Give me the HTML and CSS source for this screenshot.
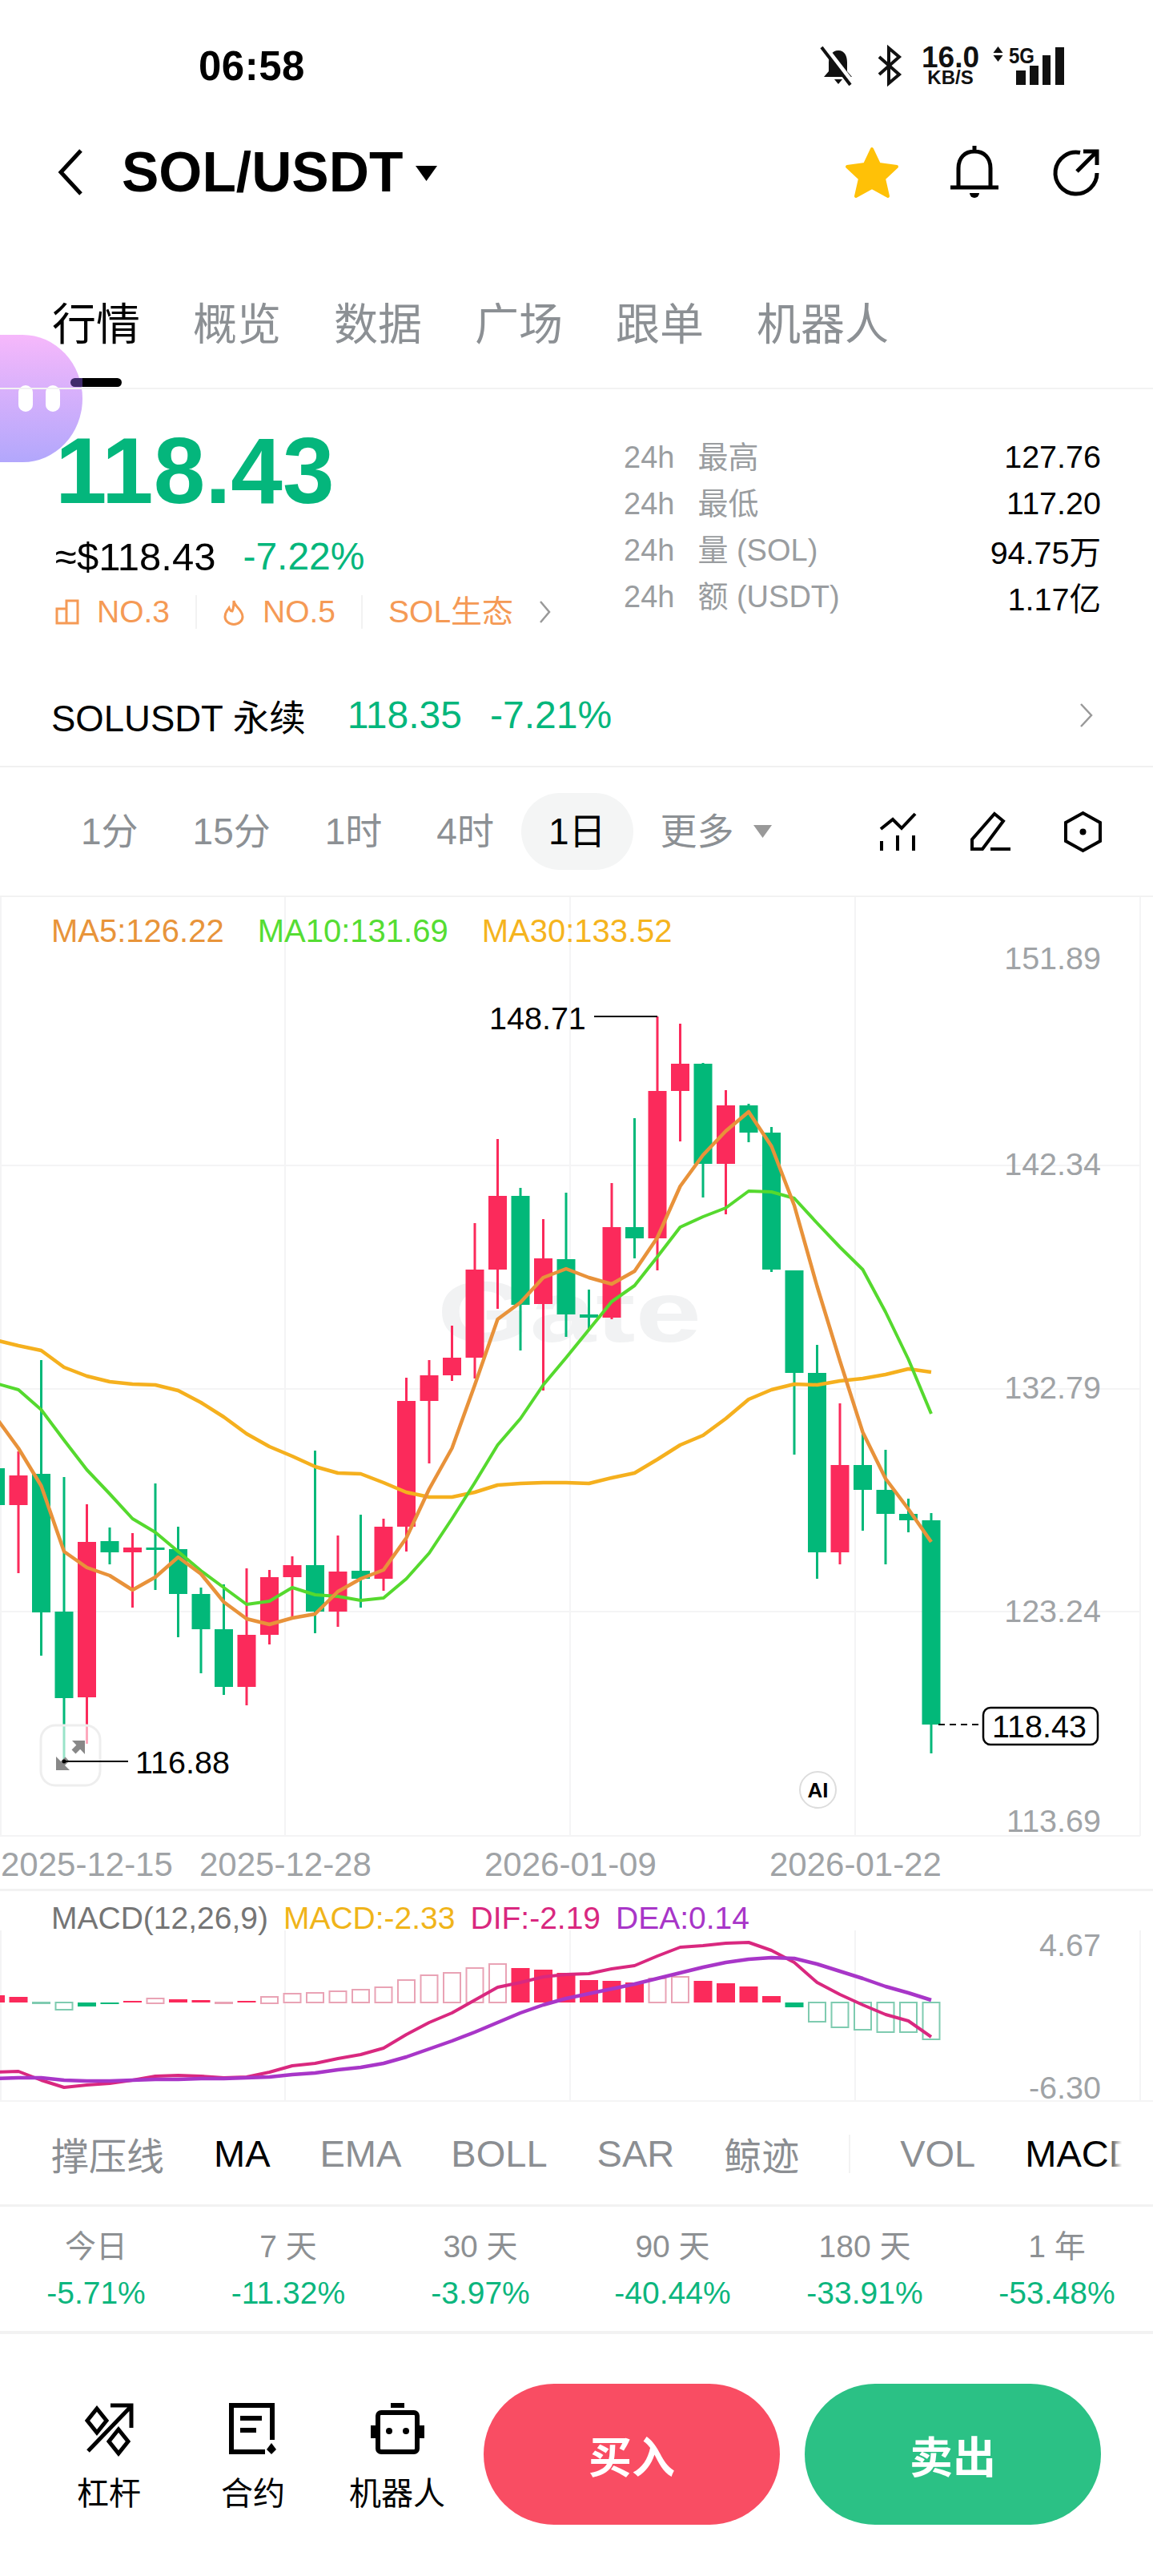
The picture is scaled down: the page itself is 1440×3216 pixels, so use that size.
FILE: index.html
```html
<!DOCTYPE html>
<html lang="zh-CN">
<head>
  <meta charset="UTF-8">
  <title>SOL/USDT</title>
  <link rel="stylesheet" href="styles.css">
</head>
<body>
<div class="blob"><i></i><i></i></div>

<div class="status">
  <span class="time">06:58</span>
  <div class="status-icons">
    <svg width="46" height="48" viewBox="0 0 46 48">
      <path d="M23 5c-8 0-12 7-12 15v11l-6 7h35l-6-7V20c0-8-3-15-11-15z" fill="#111"/>
      <path d="M18 41h10l-5 6z" fill="#111"/>
      <path d="M5 0l37 48" stroke="#fff" stroke-width="7"/>
      <path d="M2 1l36 47" stroke="#111" stroke-width="4"/>
    </svg>
    <svg width="29" height="48" viewBox="0 0 29 48" fill="none" stroke="#111" stroke-width="4">
      <path d="M2 13l25 22-13 11V2l13 11L2 35"/>
    </svg>
    <div class="speed"><b>16.0</b><span>KB/S</span></div>
    <svg class="updown" width="13" height="19" viewBox="0 0 13 19" fill="#111">
      <path d="M6.500 0l6 8H.5zM.5 11h12l-6 8z"/>
    </svg>
    <svg class="signal" width="69" height="48" viewBox="0 0 69 48" fill="#111">
      <text x="0" y="21" class="net" textLength="32" lengthAdjust="spacingAndGlyphs">5G</text>
      <rect x="9" y="30" width="12" height="18"/>
      <rect x="26" y="24" width="11" height="24"/>
      <rect x="42" y="11" width="10" height="37"/>
      <rect x="58" y="1" width="11" height="47"/>
    </svg>
  </div>
</div>

<div class="nav">
  <svg class="back" width="31" height="58" viewBox="0 0 31 58" fill="none" stroke="#000" stroke-width="5">
    <path d="M29 2L4 29l25 27"/>
  </svg>
  <h1 class="pair">SOL/USDT</h1>
  <svg class="pair-caret" width="27" height="19" viewBox="0 0 27 19"><path d="M0 0h27L13.500 19z"/></svg>
  <div class="nav-icons">
    <svg width="68" height="64" viewBox="0 0 68 64" fill="#ffc107" stroke="#ffc107" stroke-width="4" stroke-linejoin="round">
      <path d="M34 3l9 19 22 3-16 15 5 22-20-11-20 11 5-22L3 25l22-3z"/>
    </svg>
    <svg class="nav-bell" width="60" height="66" viewBox="0 0 60 66" fill="none" stroke="#000" stroke-width="5">
      <path d="M30 0v7M10 50V28c0-13 8-21 20-21s20 8 20 21v22M0 52h60"/>
      <path d="M24 59h12a6 6 0 0 1-12 0z" fill="#000" stroke="none"/>
    </svg>
    <svg width="58" height="58" viewBox="0 0 58 58" fill="none" stroke="#000" stroke-width="5">
      <path d="M34 4.500A26 26 0 1 0 55 30M30 28L53 5M38 3h17v17"/>
    </svg>
  </div>
</div>

<ul class="tabs">
  <li class="tab active">行情</li>
  <li class="tab">概览</li>
  <li class="tab">数据</li>
  <li class="tab">广场</li>
  <li class="tab">跟单</li>
  <li class="tab">机器人</li>
</ul>

<div class="ticker">
  <div class="ticker-main">
    <div class="price">118.43</div>
    <div class="sub">
      <span>≈$118.43</span>
      <span class="green">-7.22%</span>
    </div>
    <div class="tags">
      <svg class="tag-icon" width="30" height="32" viewBox="0 0 30 32" fill="none" stroke="#f59a55" stroke-width="3">
        <path d="M14 30V2h14v28zM14 12H2v18h12"/>
      </svg>
      <span>NO.3</span>
      <i class="tag-sep"></i>
      <svg class="tag-icon" width="28" height="33" viewBox="0 0 28 33" fill="none" stroke="#f59a55" stroke-width="3">
        <path d="M14 2c1 8 11 11 11 20a11 9.500 0 0 1-22 0c0-6 3-8 5-11 1 3 3 4 4 4 2-4 2-8 2-13z"/>
      </svg>
      <span>NO.5</span>
      <i class="tag-sep"></i>
      <span>SOL生态</span>
      <svg class="tag-more" width="15" height="28" viewBox="0 0 15 28" fill="none" stroke="#999" stroke-width="2.500">
        <path d="M2 1l11 13L2 27"/>
      </svg>
    </div>
  </div>
  <dl class="stats">
    <div class="stat"><dt><em>24h</em>最高</dt><dd>127.76</dd></div>
    <div class="stat"><dt><em>24h</em>最低</dt><dd>117.20</dd></div>
    <div class="stat"><dt><em>24h</em>量 (SOL)</dt><dd>94.75万</dd></div>
    <div class="stat"><dt><em>24h</em>额 (USDT)</dt><dd>1.17亿</dd></div>
  </dl>
</div>

<div class="perp">
  <span class="perp-name">SOLUSDT 永续</span>
  <span class="green">118.35</span>
  <span class="green">-7.21%</span>
  <svg class="perp-more" width="17" height="30" viewBox="0 0 17 30" fill="none" stroke="#999" stroke-width="2.500">
    <path d="M2 1l13 14L2 29"/>
  </svg>
</div>

<div class="toolbar">
  <span class="tf">1分</span>
  <span class="tf">15分</span>
  <span class="tf">1时</span>
  <span class="tf">4时</span>
  <span class="tf active">1日</span>
  <span class="tf tf-more">更多</span>
  <svg class="more-caret" width="23" height="16" viewBox="0 0 23 16" fill="#999"><path d="M0 0h23L11.500 16z"/></svg>
  <div class="tool-icons">
    <svg width="46" height="47" viewBox="0 0 46 47" fill="none" stroke="#000" stroke-width="4">
      <path d="M2 20L17 8l11 11L45 1M3 35v12M23 28v19M43 28v19"/>
    </svg>
    <svg width="51" height="50" viewBox="0 0 51 50" fill="none" stroke="#000" stroke-width="4">
      <path d="M3 47V35L31 3l11 9-26 35zM26 47h25"/>
    </svg>
    <svg width="47" height="51" viewBox="0 0 47 51" fill="none" stroke="#000" stroke-width="4">
      <path d="M23.500 2L45 14v23L23.500 49 2 37V14z"/>
      <circle cx="23.500" cy="25.500" r="4" fill="#000" stroke="none"/>
    </svg>
  </div>
</div>

<div class="chart">
  <div class="legend">
    <span class="ma5">MA5:126.22</span>
    <span class="ma10">MA10:131.69</span>
    <span class="ma30">MA30:133.52</span>
  </div>
  <svg class="chart-svg" width="1440" height="1238" viewBox="0 1120 1440 1238">
    <path class="grid" d="M1 1120V2292M356 1120V2292M712 1120V2292M1068 1120V2292M1424 1120V2292M0 1455H1424M0 1734H1424M0 2012H1424M0 2292H1424"/>
    <text class="watermark" x="546" y="1675" textLength="330" lengthAdjust="spacingAndGlyphs">Gate</text>
    <g id="candles"></g>
    <g id="ma-lines"></g>

    <rect class="expand-btn" x="51" y="2154" width="74" height="75" rx="18"/>
    <path d="M90 2173h16v17zM70 2193v17h17z" fill="#888"/>
    <path d="M100 2179L92 2187M76 2204l8-8" stroke="#888" stroke-width="7"/>

    <path class="leader" d="M742 1269H821"/>
    <text class="mark" x="611" y="1271">148.71</text>
    <path class="leader" d="M80 2199H160"/>
    <circle cx="80" cy="2199" r="2.500" fill="#000"/>
    <text class="mark" x="169" y="2200">116.88</text>

    <text class="axis" x="1375" y="1196">151.89</text>
    <text class="axis" x="1375" y="1453">142.34</text>
    <text class="axis" x="1375" y="1732">132.79</text>
    <text class="axis" x="1375" y="2011">123.24</text>
    <text class="axis" x="1375" y="2273">113.69</text>

    <path d="M1172 2153H1227" stroke="#000" stroke-width="2" stroke-dasharray="8 6"/>
    <rect x="1228" y="2132" width="143" height="46" rx="9" fill="#fff" stroke="#000" stroke-width="2.500"/>
    <text class="mark" x="1239" y="2155">118.43</text>

    <circle cx="1021.500" cy="2234.500" r="22.500" fill="#fff" stroke="#ddd" stroke-width="2"/>
    <text class="ai" x="1021.500" y="2235">AI</text>

    <text class="date" x="1" y="2327">2025-12-15</text>
    <text class="date" x="249" y="2327">2025-12-28</text>
    <text class="date" x="605" y="2327">2026-01-09</text>
    <text class="date" x="961" y="2327">2026-01-22</text>
  </svg>
</div>

<div class="macd">
  <div class="macd-legend">
    <span class="c-name">MACD(12,26,9)</span>
    <span class="c-macd">MACD:-2.33</span>
    <span class="c-dif">DIF:-2.19</span>
    <span class="c-dea">DEA:0.14</span>
  </div>
  <svg class="macd-svg" width="1440" height="264" viewBox="0 2361 1440 264">
    <path class="grid" d="M1 2410V2623M356 2410V2623M712 2410V2623M1068 2410V2623M1424 2410V2623M0 2623H1440"/>
    <g id="histogram"></g>
    <g id="macd-lines"></g>
    <text class="axis" x="1375" y="2428">4.67</text>
    <text class="axis" x="1375" y="2606">-6.30</text>
  </svg>
</div>

<div class="indicators">
  <span>撑压线</span>
  <span class="on">MA</span>
  <span>EMA</span>
  <span>BOLL</span>
  <span>SAR</span>
  <span>鲸迹</span>
  <i class="ind-sep"></i>
  <span>VOL</span>
  <span class="on">MACD</span>
</div>

<ul class="perf">
  <li><span>今日</span><b>-5.71%</b></li>
  <li><span>7 天</span><b>-11.32%</b></li>
  <li><span>30 天</span><b>-3.97%</b></li>
  <li><span>90 天</span><b>-40.44%</b></li>
  <li><span>180 天</span><b>-33.91%</b></li>
  <li><span>1 年</span><b>-53.48%</b></li>
</ul>

<div class="bottom">
  <div class="shortcut">
    <svg width="61" height="64" viewBox="0 0 61 64" fill="none" stroke="#000" stroke-width="5">
      <path d="M15 7l12 15-12 15L3 22zM42 33l12 15-12 15-12-15zM4 60L56 6M32 3h26v28"/>
    </svg>
    <span>杠杆</span>
  </div>
  <div class="shortcut">
    <svg width="60" height="64" viewBox="0 0 60 64" fill="none" stroke="#000" stroke-width="6">
      <path d="M54 46V3H3v58h42M14 19h27M14 34h20"/>
      <path d="M53 50l6 8-6 6-6-6z" fill="#000" stroke="none"/>
    </svg>
    <span>合约</span>
  </div>
  <div class="shortcut">
    <svg width="67" height="64" viewBox="0 0 67 64" fill="none" stroke="#000" stroke-width="6">
      <rect x="9" y="12" width="49" height="49" rx="4"/>
      <path d="M25 3h17M3 28v16M64 28v16"/>
      <circle cx="23" cy="35" r="4" fill="#000" stroke="none"/>
      <circle cx="44" cy="35" r="4" fill="#000" stroke="none"/>
    </svg>
    <span>机器人</span>
  </div>
  <button class="trade buy">买入</button>
  <button class="trade sell">卖出</button>
</div>

<script src="chart.js"></script>
</body>
</html>
```

FILE: styles.css
```css
* {
  padding: 0;
  margin: 0;
  box-sizing: border-box;
}

body {
  width: 1440px;
  height: 3216px;
  overflow: hidden;
  background-color: #fff;
  color: #000;
  font-family: "Liberation Sans", "Noto Sans CJK SC", sans-serif;
}

svg {
  overflow: visible;
}

ul {
  list-style: none;
}

i,
em {
  font-style: normal;
}

.green {
  color: #04b67c;
}

/* floating assistant */
.blob {
  position: absolute;
  left: 0;
  top: 418px;
  z-index: -1;
  display: flex;
  align-items: center;
  gap: 16px;
  width: 103px;
  height: 159px;
  padding-left: 23px;
  border-radius: 0 75px 75px 0 / 0 80px 80px 0;
  background: linear-gradient(#f6b8fb, #b2a7fc);
}

.blob i {
  width: 18px;
  height: 33px;
  border-radius: 9px;
  background-color: #fff;
}

/* status bar */
.status {
  display: flex;
  justify-content: space-between;
  align-items: center;
  height: 164px;
  padding: 0 111px 0 248px;
}

.time {
  font-size: 51px;
  font-weight: bold;
  letter-spacing: .5px;
}

.status-icons {
  display: flex;
  align-items: center;
  gap: 26px;
}

.speed {
  display: flex;
  flex-direction: column;
  align-items: center;
  width: 72px;
  color: #111;
  font-weight: bold;
}

.speed b {
  font-size: 37px;
  line-height: 30px;
}

.speed span {
  font-size: 24px;
  line-height: 20px;
}

.updown {
  margin: -29px 0 0 -9px;
}

.signal {
  margin-left: -19px;
}

.net {
  font-size: 28px;
  font-weight: bold;
}

/* nav */
.nav {
  display: flex;
  align-items: center;
  height: 102px;
  padding: 0 67px 0 72px;
}

.pair {
  margin-left: 49px;
  font-size: 69.5px;
  line-height: 78px;
}

.pair-caret {
  margin: 2px 0 0 16px;
}

.nav-icons {
  display: flex;
  align-items: center;
  gap: 66px;
  margin-left: auto;
}

.nav-bell {
  margin: 0 2px 0 -2px;
}

/* tabs */
.tabs {
  display: flex;
  gap: 66px;
  height: 220px;
  padding: 100px 0 0 65px;
  border-bottom: 2px solid #f2f2f2;
}

.tab {
  font-size: 55px;
  line-height: 78px;
  color: #8c9094;
}

.tab.active {
  color: #000;
}

.tab.active::after {
  content: "";
  display: block;
  width: 64px;
  height: 11px;
  margin: 28px auto 0;
  border-radius: 6px;
  background: linear-gradient(90deg, #3f2a6b 15px, #000 15px);
}

/* ticker */
.ticker {
  display: flex;
  justify-content: space-between;
  height: 343px;
  padding: 0 65px 0 69px;
}

.price {
  margin-top: 47px;
  font-size: 116px;
  font-weight: bold;
  line-height: 110px;
  color: #04b67c;
}

.sub {
  display: flex;
  gap: 34px;
  margin-top: 22px;
  font-size: 49px;
  line-height: 60px;
}

.sub .green {
  font-size: 48px;
}

.tags {
  display: flex;
  align-items: center;
  gap: 22px;
  margin-top: 15px;
  font-size: 39px;
  line-height: 48px;
  color: #f59a55;
}

.tag-sep {
  width: 2px;
  height: 42px;
  margin: 0 10px;
  background-color: #f2f2f2;
}

.tag-more {
  margin-left: 10px;
}

.stats {
  width: 596px;
  padding-top: 55px;
  font-size: 38px;
}

.stat {
  display: flex;
  justify-content: space-between;
  align-items: center;
  height: 58px;
}

.stat dt {
  margin-bottom: 6px;
  color: #9a9da0;
}

.stat em {
  margin-right: 29px;
}

.stat dd {
  font-size: 39.5px;
}

/* perpetual row */
.perp {
  display: flex;
  align-items: center;
  height: 129px;
  padding: 0 75px 0 64px;
  border-bottom: 2px solid #f0f0f0;
  font-size: 48px;
}

.perp-name {
  margin-right: 52px;
  font-size: 45.5px;
}

.perp .green + .green {
  margin-left: 35px;
}

.perp-more {
  margin-left: auto;
}

/* timeframes */
.toolbar {
  display: flex;
  align-items: center;
  height: 162px;
  padding: 0 64px 0 67px;
  border-bottom: 2px solid #f2f2f2;
  font-size: 46px;
}

.tf {
  padding: 0 34px;
  line-height: 96px;
  border-radius: 48px;
  color: #8c9094;
}

.tf.active {
  background-color: #f4f5f5;
  color: #000;
}

.more-caret {
  margin-left: -10px;
}

.tool-icons {
  display: flex;
  align-items: center;
  gap: 67px;
  margin-left: auto;
}

/* chart */
.chart {
  position: relative;
  height: 1238px;
}

.chart-svg,
.macd-svg {
  display: block;
}

.legend {
  position: absolute;
  left: 64px;
  top: 17px;
  z-index: 1;
  display: flex;
  gap: 42px;
  font-size: 40px;
  line-height: 50px;
}

.ma5 {
  color: #e8943a;
}

.ma10 {
  color: #55dd33;
}

.ma30 {
  color: #f5b41e;
}

.grid {
  fill: none;
  stroke: #f4f4f5;
  stroke-width: 2;
}

.watermark {
  font-size: 108px;
  font-weight: bold;
  fill: #f1f2f3;
}

.expand-btn {
  fill: rgba(255, 255, 255, .6);
  stroke: #eee;
  stroke-width: 3;
}

.leader {
  stroke: #000;
  stroke-width: 2;
}

.mark,
.axis,
.date,
.ai {
  dominant-baseline: central;
}

.mark {
  font-size: 39.5px;
  fill: #000;
}

.axis {
  font-size: 39.5px;
  text-anchor: end;
  fill: #a0a3a6;
}

.date {
  font-size: 42px;
  fill: #a0a3a6;
}

.ai {
  font-size: 26px;
  font-weight: bold;
  text-anchor: middle;
}

/* macd */
.macd {
  position: relative;
  height: 267px;
  border-top: 3px solid #f2f2f2;
}

.macd-legend {
  position: absolute;
  left: 64px;
  top: 9px;
  z-index: 1;
  display: flex;
  gap: 19px;
  font-size: 39px;
  line-height: 50px;
}

.c-name {
  color: #757575;
}

.c-macd {
  color: #f0b41a;
}

.c-dif {
  color: #d9287f;
}

.c-dea {
  color: #a836c8;
}

/* indicator row */
.indicators {
  position: relative;
  display: flex;
  align-items: center;
  gap: 62px;
  width: 1405px;
  height: 127px;
  padding-left: 64px;
  overflow: hidden;
  white-space: nowrap;
  font-size: 47px;
  color: #8b8e92;
}

.indicators::after {
  content: "";
  position: absolute;
  right: 0;
  top: 0;
  width: 24px;
  height: 100%;
  background: linear-gradient(90deg, rgba(255, 255, 255, 0), #fff 85%);
}

.indicators .on {
  color: #000;
}

.ind-sep {
  flex: none;
  width: 2px;
  height: 48px;
  background-color: #f2f2f2;
}

/* performance */
.perf {
  display: grid;
  grid-template-columns: repeat(6, 1fr);
  height: 158px;
  padding-top: 25px;
  border-top: 3px solid #f2f2f2;
  text-align: center;
}

.perf span,
.perf b {
  display: block;
  line-height: 50px;
}

.perf span {
  font-size: 39px;
  color: #8d9093;
}

.perf b {
  margin-top: 8px;
  font-size: 39px;
  font-weight: normal;
  color: #0cb67e;
}

/* bottom bar */
.bottom {
  display: flex;
  align-items: flex-start;
  height: 302px;
  padding: 62px 0 0 46px;
  border-top: 4px solid #f2f2f2;
}

.shortcut {
  display: flex;
  flex-direction: column;
  align-items: center;
  width: 180px;
  padding-top: 24px;
}

.shortcut svg {
  display: block;
}

.shortcut span {
  margin-top: 24px;
  font-size: 40px;
  line-height: 50px;
}

.trade {
  width: 370px;
  height: 176px;
  border: 0;
  border-radius: 88px;
  font-family: inherit;
  font-size: 54px;
  font-weight: bold;
  color: #fff;
}

.buy {
  margin-left: 18px;
  background-color: #f94d63;
}

.sell {
  margin-left: 31px;
  background-color: #2bc185;
}
```

FILE: chart.js
```js
(function () {
  var NS = 'http://www.w3.org/2000/svg',
    RED = '#fb2a5b',
    GREEN = '#02b879',
    HOLLOW_RED = '#e9a3b5',
    HOLLOW_GREEN = '#7fcbb0',
    BAR = 23;

  // candles start one slot off the left edge: [up, high, bodyTop, bodyBottom, low]
  var candles = [
    [0, 1833, 1833, 1879, 1879],
    [1, 1812, 1842, 1879, 1964],
    [0, 1698, 1840, 2013, 2067],
    [0, 1844, 2012, 2120, 2196],
    [1, 1878, 1925, 2119, 2177],
    [0, 1907, 1924, 1938, 1953],
    [1, 1914, 1932, 1938, 2007],
    [0, 1852, 1932, 1935, 1985],
    [0, 1906, 1934, 1990, 2044],
    [0, 1982, 1990, 2034, 2089],
    [0, 1978, 2034, 2106, 2116],
    [1, 1958, 2041, 2106, 2129],
    [1, 1960, 1969, 2041, 2053],
    [1, 1943, 1954, 1969, 2018],
    [0, 1811, 1954, 2012, 2039],
    [1, 1917, 1962, 2012, 2031],
    [0, 1891, 1961, 1971, 2007],
    [1, 1896, 1906, 1971, 1986],
    [1, 1720, 1749, 1906, 1937],
    [1, 1698, 1717, 1749, 1827],
    [1, 1655, 1695, 1717, 1724],
    [1, 1527, 1585, 1695, 1721],
    [1, 1422, 1493, 1585, 1634],
    [0, 1483, 1493, 1629, 1686],
    [1, 1522, 1571, 1628, 1736],
    [0, 1489, 1572, 1641, 1669],
    [0, 1610, 1641, 1645, 1659],
    [1, 1477, 1532, 1645, 1647],
    [0, 1396, 1532, 1546, 1571],
    [1, 1269, 1362, 1546, 1586],
    [1, 1278, 1328, 1362, 1425],
    [0, 1327, 1328, 1453, 1495],
    [1, 1361, 1380, 1453, 1516],
    [0, 1378, 1380, 1414, 1426],
    [0, 1407, 1414, 1585, 1588],
    [0, 1586, 1586, 1714, 1816],
    [0, 1679, 1714, 1938, 1971],
    [1, 1752, 1829, 1938, 1953],
    [0, 1785, 1829, 1860, 1911],
    [0, 1810, 1860, 1890, 1953],
    [0, 1871, 1890, 1898, 1913],
    [0, 1889, 1898, 2153, 2189]
  ];

  var ma5 = [1769, 1808, 1855, 1937, 1957, 1967, 1985, 1969, 1944, 1965, 2000, 2021, 2028, 2020, 2015, 1987, 1971, 1960, 1920, 1859, 1808, 1729, 1647, 1626, 1595, 1584, 1595, 1603, 1587, 1545, 1481, 1442, 1412, 1388, 1431, 1505, 1606, 1699, 1788, 1846, 1884, 1925];
  var ma10 = [1727, 1735, 1760, 1798, 1835, 1865, 1896, 1913, 1937, 1961, 1982, 2003, 1999, 1982, 1991, 1993, 1998, 1995, 1971, 1939, 1896, 1851, 1804, 1771, 1729, 1695, 1660, 1625, 1605, 1569, 1532, 1519, 1508, 1487, 1488, 1496, 1527, 1557, 1585, 1638, 1697, 1765];
  var ma30 = [1673, 1680, 1686, 1707, 1718, 1725, 1728, 1729, 1736, 1751, 1769, 1790, 1806, 1818, 1831, 1839, 1840, 1851, 1863, 1869, 1869, 1863, 1854, 1852, 1851, 1851, 1852, 1845, 1839, 1822, 1804, 1792, 1771, 1747, 1735, 1728, 1729, 1724, 1721, 1716, 1709, 1713];

  // histogram: [kind, top, bottom]  r/g solid, R/G hollow
  var hist = [
    ['r', 2491, 2500], ['r', 2493, 2500], ['G', 2500, 2501], ['G', 2500, 2509], ['g', 2500, 2505],
    ['g', 2500, 2502], ['r', 2498, 2500], ['R', 2495, 2501], ['r', 2496, 2500], ['r', 2497, 2500],
    ['R', 2500, 2501], ['r', 2498, 2500], ['R', 2493, 2501], ['R', 2489, 2500], ['R', 2488, 2500],
    ['R', 2486, 2500], ['R', 2484, 2500], ['R', 2481, 2500], ['R', 2472, 2500], ['R', 2466, 2500],
    ['R', 2463, 2500], ['R', 2457, 2500], ['R', 2452, 2500], ['r', 2457, 2500], ['r', 2459, 2500],
    ['r', 2463, 2500], ['r', 2472, 2500], ['r', 2473, 2500], ['r', 2475, 2500], ['R', 2470, 2500],
    ['R', 2468, 2500], ['r', 2473, 2500], ['r', 2476, 2500], ['r', 2480, 2500], ['r', 2492, 2500],
    ['g', 2500, 2506], ['G', 2500, 2524], ['G', 2500, 2531], ['G', 2500, 2534], ['G', 2500, 2537],
    ['G', 2500, 2537], ['G', 2500, 2546]
  ];

  var dif = [2587, 2586, 2597, 2606, 2603, 2601, 2597, 2592, 2591, 2592, 2594, 2593, 2587, 2579, 2576, 2570, 2565, 2557, 2540, 2525, 2513, 2497, 2481, 2475, 2468, 2465, 2464, 2458, 2454, 2442, 2431, 2429, 2426, 2425, 2435, 2450, 2475, 2490, 2503, 2515, 2523, 2543];
  var dea = [2595, 2594, 2594, 2597, 2598, 2598, 2597, 2596, 2596, 2595, 2595, 2594, 2593, 2590, 2588, 2584, 2581, 2576, 2568, 2558, 2548, 2537, 2525, 2513, 2503, 2495, 2489, 2483, 2477, 2470, 2463, 2456, 2450, 2446, 2444, 2445, 2452, 2461, 2470, 2480, 2488, 2497];

  function slot(i) {
    return 28.5 * i - 5.5;
  }

  function add(parent, tag, attrs) {
    var el = document.createElementNS(NS, tag);
    for (var k in attrs) {
      el.setAttribute(k, attrs[k]);
    }
    parent.appendChild(el);
  }

  function line(parent, ys, color, width) {
    var points = ys.map(function (y, i) {
      return slot(i) + ',' + y;
    });
    add(parent, 'polyline', {
      points: points.join(' '),
      fill: 'none',
      stroke: color,
      'stroke-width': width,
      'stroke-linejoin': 'round'
    });
  }

  var candleLayer = document.getElementById('candles');
  candles.forEach(function (c, i) {
    var x = slot(i), color = c[0] ? RED : GREEN;
    add(candleLayer, 'rect', {x: x - 1.5, y: c[1], width: 3, height: c[4] - c[1], fill: color});
    add(candleLayer, 'rect', {x: x - BAR / 2, y: c[2], width: BAR, height: c[3] - c[2], fill: color});
  });

  var maLayer = document.getElementById('ma-lines');
  line(maLayer, ma30, '#f5b01e', 4.5);
  line(maLayer, ma10, '#55d92e', 4);
  line(maLayer, ma5, '#e8923a', 4.5);

  var histLayer = document.getElementById('histogram');
  hist.forEach(function (h, i) {
    var x = slot(i) - BAR / 2, kind = h[0];
    if (kind === 'r' || kind === 'g') {
      add(histLayer, 'rect', {x: x, y: h[1], width: BAR, height: h[2] - h[1], fill: kind === 'r' ? RED : GREEN});
    } else {
      add(histLayer, 'rect', {
        x: x + 1,
        y: h[1],
        width: BAR - 2,
        height: h[2] - h[1],
        fill: '#fff',
        stroke: kind === 'R' ? HOLLOW_RED : HOLLOW_GREEN,
        'stroke-width': 2
      });
    }
  });

  var macdLayer = document.getElementById('macd-lines');
  line(macdLayer, dif, '#d9287f', 4);
  line(macdLayer, dea, '#a836c8', 4.5);
}());
```
